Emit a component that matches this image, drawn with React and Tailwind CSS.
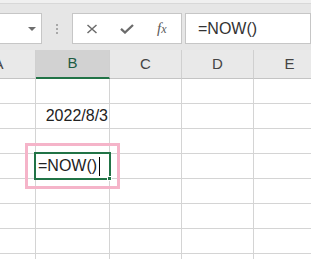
const COLS = [
  { key: 'A', w: 'w-[74px] -ml-[38px]' },
  { key: 'B', w: 'w-[74px]' },
  { key: 'C', w: 'w-[72px]' },
  { key: 'D', w: 'w-[72px]' },
  { key: 'E', w: 'w-[72px]' },
];

const ROWS = 8;

function CellContent({ col, row }) {
  if (col === 'B' && row === 1) {
    return <div className="flex h-full items-center justify-end pr-[1px] text-[16px] text-[#222]">2022/8/3</div>;
  }
  if (col === 'B' && row === 3) {
    return (
      <div className="flex h-full items-center pl-[2px] text-[16px] text-[#222]">
        <span>=NOW()</span>
        <span className="ml-[2px] inline-block h-[19px] w-px bg-black" />
      </div>
    );
  }
  return null;
}

export default function App() {
  return (
    <div className="relative h-[259px] w-[311px] overflow-hidden bg-white font-['Liberation_Sans',Arial,sans-serif]">
      {/* formula bar area */}
      <div className="h-[50px] bg-[#e6e6e6]">
        <div className="h-[4px] border-b border-[#d8d8d8] bg-[#f0f0f0]" />
        <div className="flex items-center pt-[9px]">
          <div className="flex h-[31px] w-[42px] items-center justify-end border-y border-r border-[#c6c6c6] bg-white pr-[5px]">
            <span className="h-0 w-0 border-x-[4px] border-t-[4px] border-x-transparent border-t-[#6e6e6e]" />
          </div>
          <div className="ml-[14px] flex flex-col gap-[2px]">
            <span className="h-[2px] w-[2px] bg-[#a8a8a8]" />
            <span className="h-[2px] w-[2px] bg-[#a8a8a8]" />
            <span className="h-[2px] w-[2px] bg-[#a8a8a8]" />
          </div>
          <div className="ml-[14px] flex h-[31px] w-[110px] items-center border border-[#c6c6c6] bg-white pl-[13px]">
            <svg width="12" height="10" viewBox="0 0 12 10">
              <path d="M1.5 1 L10.5 9 M10.5 1 L1.5 9" stroke="#6b6b6b" strokeWidth="1.5" fill="none" />
            </svg>
            <svg className="ml-[22px]" width="14" height="10" viewBox="0 0 14 10">
              <path d="M1 4.8 L5 8.5 L13 1" stroke="#6b6b6b" strokeWidth="2.3" fill="none" />
            </svg>
            <span className="ml-[23px] font-['Liberation_Serif',serif] text-[15px] italic leading-none text-[#5a5a5a]">
              f<span className="text-[12px]">x</span>
            </span>
          </div>
          <div className="ml-[3px] flex h-[31px] w-[126px] items-center border border-[#c6c6c6] bg-white pl-[12px] text-[16px] text-[#333]">
            =NOW()
          </div>
        </div>
      </div>

      {/* column headers */}
      <div className="flex h-[29px] bg-[#e9e9e9]">
        {COLS.map((c) => (
          <div
            key={c.key}
            className={`${c.w} flex shrink-0 items-center justify-center border-r border-[#d0d0d0] text-[15px] ${
              c.key === 'B'
                ? 'border-b-2 border-b-[#217346] bg-[#d2d2d2] text-[#1d5c43]'
                : 'border-b border-b-[#c4c4c4] text-[#444]'
            }`}
          >
            {c.key}
          </div>
        ))}
      </div>

      {/* grid */}
      {Array.from({ length: ROWS }).map((_, r) => (
        <div key={r} className="flex h-[25px]">
          {COLS.map((c) => (
            <div key={c.key} className={`${c.w} shrink-0 border-r border-b border-[#d4d4d4]`}>
              <CellContent col={c.key} row={r} />
            </div>
          ))}
        </div>
      ))}

      {/* active cell */}
      <div className="pointer-events-none absolute left-[34px] top-[152px] h-[28px] w-[77px] border-2 border-[#217346]" />
      <div className="pointer-events-none absolute left-[107px] top-[176px] h-[5px] w-[5px] border border-white bg-[#217346]" />

      {/* highlight annotation */}
      <div className="pointer-events-none absolute left-[25px] top-[143px] h-[46px] w-[95px] border-[3px] border-[#f5b4c9]" />
    </div>
  );
}
